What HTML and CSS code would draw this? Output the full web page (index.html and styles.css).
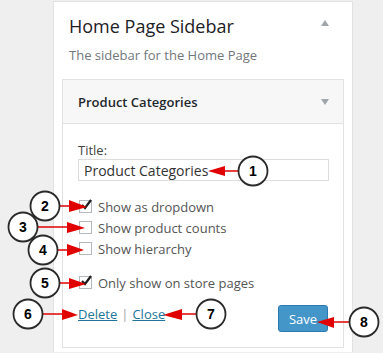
FILE: index.html
```html
<!DOCTYPE html>
<html lang="en">
<head>
  <meta charset="UTF-8">
  <title>Home Page Sidebar</title>
  <link rel="stylesheet" href="styles.css">
</head>
<body>
  <div class="sidebar">
    <div class="sidebar-head">
      <h2>Home Page Sidebar</h2>
      <span class="arrow-up"></span>
    </div>
    <p class="desc">The sidebar for the Home Page</p>

    <div class="widget">
      <div class="widget-top">
        <h3>Product Categories</h3>
        <span class="arrow-down"></span>
      </div>
      <div class="widget-inside">
        <label class="field-label">Title:</label>
        <input class="title-input" type="text" value="Product Categories">

        <div class="checks">
          <div class="check"><span class="box"><svg width="14" height="14" viewBox="0 0 14 14"><path d="M3 7 L6 10 L12 2" fill="none" stroke="#1e1e1e" stroke-width="2.2"/></svg></span>Show as dropdown</div>
          <div class="check"><span class="box"></span>Show product counts</div>
          <div class="check"><span class="box"></span>Show hierarchy</div>
        </div>

        <div class="check store"><span class="box"><svg width="14" height="14" viewBox="0 0 14 14"><path d="M3 7 L6 10 L12 2" fill="none" stroke="#1e1e1e" stroke-width="2.2"/></svg></span>Only show on store pages</div>

        <div class="controls">
          <div class="links"><a href="#">Delete</a><span class="sep">|</span><a href="#">Close</a></div>
          <button class="save">Save</button>
        </div>
      </div>
    </div>
  </div>

  <!-- numbered callouts drawn over the form -->
  <svg class="callouts" width="383" height="353" viewBox="0 0 383 353">
    <g class="arrows">
      <line x1="238" y1="171" x2="224" y2="171"/><polygon points="208,171 225,166 225,176"/>
      <line x1="60" y1="206" x2="70" y2="206"/><polygon points="87,207 69,200 69,212"/>
      <line x1="38" y1="227" x2="68" y2="227"/><polygon points="85,228 67,222 67,233"/>
      <line x1="58" y1="250" x2="68" y2="250"/><polygon points="84,250 67,244 67,256"/>
      <line x1="60" y1="283" x2="70" y2="283"/><polygon points="86,284 69,278 69,289"/>
      <line x1="43" y1="314" x2="64" y2="314"/><polygon points="78,315 62,309 62,320"/>
      <line x1="196" y1="314" x2="181" y2="314"/><polygon points="163,315 182,309 182,320"/>
      <line x1="349" y1="322" x2="333" y2="322"/><polygon points="317,322 334,317 334,328"/>
    </g>
    <g class="bubbles">
      <circle cx="253" cy="171" r="14.5"/><text x="253" y="176">1</text>
      <circle cx="45" cy="206" r="14.5"/><text x="45" y="211">2</text>
      <circle cx="23" cy="227" r="14.5"/><text x="23" y="232">3</text>
      <circle cx="43" cy="250" r="14.5"/><text x="43" y="255">4</text>
      <circle cx="45" cy="283" r="14.5"/><text x="45" y="288">5</text>
      <circle cx="28" cy="314" r="14.5"/><text x="28" y="319">6</text>
      <circle cx="211" cy="314" r="14.5"/><text x="211" y="319">7</text>
      <circle cx="364" cy="322" r="14.5"/><text x="364" y="327">8</text>
    </g>
  </svg>
</body>
</html>
```

FILE: styles.css
```css
body {
  margin: 0;
  height: 353px;
  overflow: hidden;
  background: #efefef;
  font-family: "Open Sans", Arial, sans-serif;
  position: relative;
}

.sidebar {
  margin: 1px 0 0 53px;
  width: 298px;
  height: 338px;
  background: #fff;
  border: 1px solid #e2e2e2;
  border-bottom: none;
  padding-top: 12px;
}

.sidebar-head {
  display: flex;
  justify-content: space-between;
  align-items: center;
  padding: 0 23px 0 15px;
}

.sidebar-head h2 {
  margin: 0;
  font-size: 18px;
  line-height: 24px;
  font-weight: 400;
  color: #1d2125;
}

.arrow-up {
  width: 0;
  height: 0;
  border-left: 4px solid transparent;
  border-right: 4px solid transparent;
  border-bottom: 6px solid #a0a5aa;
  margin-top: -6px;
}

.desc {
  margin: 8px 0 0 0;
  padding: 0 15px;
  font-size: 13px;
  line-height: 18px;
  color: #72777c;
}

.widget {
  margin: 15px 8px 0 8px;
  border: 1px solid #e2e2e2;
  background: #fff;
}

.widget-top {
  display: flex;
  justify-content: space-between;
  align-items: center;
  height: 43px;
  padding: 0 14px 0 15px;
  background: #f7f7f7;
  border-bottom: 1px solid #e2e2e2;
}

.widget-top h3 {
  margin: 0;
  font-size: 13px;
  font-weight: 600;
  color: #23282d;
}

.arrow-down {
  width: 0;
  height: 0;
  border-left: 4px solid transparent;
  border-right: 4px solid transparent;
  border-top: 6px solid #a0a5aa;
}

.widget-inside {
  padding: 17px 15px 15px 15px;
}

.field-label {
  display: block;
  font-size: 13px;
  line-height: 18px;
  color: #444;
}

.title-input {
  display: block;
  box-sizing: border-box;
  width: 251px;
  height: 22px;
  margin: 0;
  padding: 0 5px;
  border: 1px solid #ddd;
  font-family: "Open Sans", Arial, sans-serif;
  font-size: 14px;
  color: #333;
}

.checks {
  margin-top: 15px;
}

.check {
  display: flex;
  align-items: center;
  height: 21px;
  font-size: 13px;
  color: #555;
}

.check.store {
  margin-top: 13px;
}

.box {
  box-sizing: border-box;
  width: 13px;
  height: 13px;
  margin: 0 6px 0 1px;
  border: 1px solid #b4b9be;
  background: #fff;
  position: relative;
}

.box svg {
  position: absolute;
  left: -1px;
  top: -3px;
}

.controls {
  display: flex;
  justify-content: space-between;
  margin-top: 12px;
}

.links {
  font-size: 13px;
  line-height: 18px;
  color: #a0a5aa;
}

.links a {
  color: #21759b;
}

.sep {
  margin: 0 4px;
}

.save {
  width: 50px;
  height: 27px;
  padding: 0;
  background: #4596c8;
  border: 1px solid #2c7bb0;
  border-radius: 3px;
  color: #fff;
  font-family: "Open Sans", Arial, sans-serif;
  font-size: 13px;
}

.callouts {
  position: absolute;
  left: 0;
  top: 0;
}

.arrows line {
  stroke: #e00000;
  stroke-width: 1.5;
}

.arrows polygon {
  fill: #e00000;
}

.bubbles circle {
  fill: #fff;
  stroke: #2a2a2a;
  stroke-width: 1.8;
}

.bubbles text {
  font-family: "Liberation Sans", Arial, sans-serif;
  font-weight: bold;
  font-size: 14px;
  text-anchor: middle;
  fill: #000;
}
```
